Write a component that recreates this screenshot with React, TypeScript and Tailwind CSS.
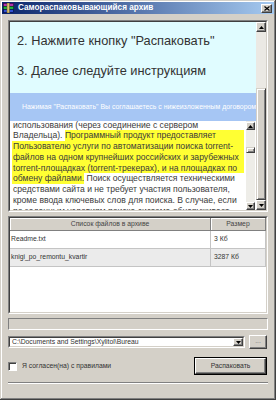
import React from "react";

function Tri({ up = false }: { up?: boolean }) {
  return (
    <svg width="5" height="3" viewBox="0 0 5 3" className="block">
      {up ? (
        <polygon points="2.5,0 5,3 0,3" fill="#000" />
      ) : (
        <polygon points="0,0 5,0 2.5,3" fill="#000" />
      )}
    </svg>
  );
}

function ArrowBtn({ up = false, className = "" }: { up?: boolean; className?: string }) {
  return (
    <div
      className={`bg-[#d4d0c8] border border-t-white border-l-white border-r-[#404040] border-b-[#404040] shadow-[inset_-1px_-1px_0_#808080] flex items-center justify-center shrink-0 ${className}`}
    >
      <Tri up={up} />
    </div>
  );
}

function Thumb({ className = "" }: { className?: string }) {
  return (
    <div
      className={`bg-[#d4d0c8] border border-t-[#d4d0c8] border-l-[#d4d0c8] border-r-[#404040] border-b-[#404040] shadow-[inset_1px_1px_0_#ffffff,inset_-1px_-1px_0_#808080] ${className}`}
    />
  );
}

function Sunken({
  className = "",
  innerClassName = "",
  children,
}: {
  className?: string;
  innerClassName?: string;
  children?: React.ReactNode;
}) {
  return (
    <div className={`border border-t-[#808080] border-l-[#808080] border-r-white border-b-white ${className}`}>
      <div
        className={`w-full h-full border border-t-[#404040] border-l-[#404040] border-r-[#d4d0c8] border-b-[#d4d0c8] ${innerClassName}`}
      >
        {children}
      </div>
    </div>
  );
}

function RarIcon() {
  return (
    <svg width="11" height="10" viewBox="0 0 11 10" className="block">
      <rect x="0.5" y="0.5" width="10" height="3" fill="#b030b0" stroke="#400040" strokeWidth="0.6" />
      <rect x="0.5" y="3.5" width="10" height="3" fill="#20b040" stroke="#004010" strokeWidth="0.6" />
      <rect x="0.5" y="6.5" width="10" height="3" fill="#3050d0" stroke="#000840" strokeWidth="0.6" />
      <rect x="4" y="0" width="2.5" height="10" fill="#d8c070" stroke="#605010" strokeWidth="0.5" />
    </svg>
  );
}

export default function App() {
  return (
    <div className="w-[276px] h-[400px] bg-[#d4d0c8] flex flex-col overflow-hidden font-['Liberation_Sans',Arial,sans-serif] text-[#333] shadow-[inset_-1px_-1px_0_#404040,inset_1px_1px_0_#d4d0c8,inset_-2px_-2px_0_#808080,inset_2px_2px_0_#ffffff]">
      {/* Title bar */}
      <div className="mt-[2px] mx-[2px] h-[12px] shrink-0 flex items-center bg-[linear-gradient(to_right,#0a246a,#a6caf0)]">
        <div className="ml-[1px]">
          <RarIcon />
        </div>
        <div className="ml-[4px] text-[8.2px] font-bold text-white whitespace-nowrap leading-none">
          Самораспаковывающийся архив
        </div>
        <div className="flex-1" />
        <div className="mr-[2px] w-[11px] h-[9px] bg-[#d4d0c8] border border-t-white border-l-white border-r-[#404040] border-b-[#404040] shadow-[inset_-1px_-1px_0_#808080] flex items-center justify-center">
          <svg width="6" height="5" viewBox="0 0 6 5" className="block">
            <path d="M0.5 0.5 L5.5 4.5 M5.5 0.5 L0.5 4.5" stroke="#000" strokeWidth="1.2" />
          </svg>
        </div>
      </div>

      <div className="px-[8px] flex flex-col">
        {/* Top HTML pane */}
        <Sunken className="mt-[6px] h-[192px]" innerClassName="flex overflow-hidden">
          <div className="flex-1 min-w-0 bg-[#e0fcff] flex flex-col overflow-hidden">
            <div className="pl-[7px] pt-[4px] text-[12.8px] leading-[30px] text-[#333] whitespace-nowrap">
              <div>2. Нажмите кнопку "Распаковать"</div>
              <div>3. Далее следуйте инструкциям</div>
            </div>
            <div className="mt-[7px] h-[28px] shrink-0 bg-[#a6c6f4] flex items-center pl-[12px] text-[6.9px] text-white whitespace-nowrap overflow-hidden">
              Нажимая "Распаковать" Вы соглашаетесь с нижеизложенным договором
            </div>
            <div className="flex-1 min-h-0 bg-white flex overflow-hidden">
              <div className="flex-1 min-w-0 pl-[2px] pr-[2px] overflow-hidden">
                <div className="mt-[-1.4px] text-[8.6px] leading-[10.75px] text-[#3a3a3a] whitespace-nowrap">
                  <div className="pl-[1px]">использования (через соединение с сервером</div>
                  <div className="pl-[1px] flex">
                    <span>Владельца).&nbsp;</span>
                    <span className="flex-1 bg-[#ffff33]">Программный продукт предоставляет</span>
                  </div>
                  <div className="pl-[1px] bg-[#ffff33]">Пользователю услуги по автоматизации поиска torrent-</div>
                  <div className="pl-[1px] bg-[#ffff33]">файлов на одном крупнейших российских и зарубежных</div>
                  <div className="pl-[1px] bg-[#ffff33]">torrent-площадках (torrent-трекерах), и на площадках по</div>
                  <div className="flex">
                    <span className="pl-[1px] bg-[#ffff33]">обмену файлами.</span>
                    <span>&nbsp;Поиск осуществляется техническими</span>
                  </div>
                  <div className="pl-[1px]">средствами сайта и не требует участия пользователя,</div>
                  <div className="pl-[1px]">кроме ввода ключевых слов для поиска. В случае, если</div>
                  <div className="pl-[1px]">по заданным условиям поиска система обнаруживает</div>
                </div>
              </div>
              <div className="w-[9px] mr-[1px] pt-[1px] flex flex-col bg-[#eeede8]">
                <ArrowBtn up className="h-[8px]" />
                <div className="h-[17px]" />
                <Thumb className="h-[6px]" />
                <div className="flex-1" />
                <ArrowBtn className="h-[8px]" />
              </div>
            </div>
          </div>
          <div className="w-[10px] flex flex-col bg-[#ebe9e4]">
            <ArrowBtn up className="h-[10px]" />
            <div className="h-[56px]" />
            <Thumb className="flex-1" />
            <ArrowBtn className="h-[10px]" />
          </div>
        </Sunken>

        {/* File list */}
        <Sunken className="mt-[4px] h-[98px]" innerClassName="bg-white flex flex-col overflow-hidden">
          <div className="h-[13px] shrink-0 flex text-[6.8px] text-[#444]">
            <div className="w-[201px] flex items-center justify-center bg-[#d4d0c8] border-r border-b border-r-[#808080] border-b-[#808080] shadow-[inset_1px_1px_0_#ffffff]">
              Список файлов в архиве
            </div>
            <div className="flex-1 flex items-center justify-center bg-[#d4d0c8] border-r border-b border-r-[#808080] border-b-[#808080] shadow-[inset_1px_1px_0_#ffffff]">
              Размер
            </div>
          </div>
          <div className="h-[18px] shrink-0 flex text-[6.8px] text-[#333] bg-white border-b border-b-[#c4c4c4]">
            <div className="w-[201px] flex items-center pl-[1px] border-r border-r-[#c4c4c4]">Readme.txt</div>
            <div className="flex-1 flex items-center pl-[3px] border-r border-r-[#c4c4c4]">3 Кб</div>
          </div>
          <div className="h-[18px] shrink-0 flex text-[6.8px] text-[#333] bg-[#ebebeb] border-b border-b-[#c4c4c4]">
            <div className="w-[201px] flex items-center pl-[1px] border-r border-r-[#c4c4c4]">knigi_po_remontu_kvartir</div>
            <div className="flex-1 flex items-center pl-[3px] border-r border-r-[#c4c4c4]">3287 Кб</div>
          </div>
        </Sunken>

        {/* Progress bar */}
        <div className="mt-[4px] h-[12px] bg-[#d4d0c8] border border-t-[#808080] border-l-[#808080] border-r-white border-b-white" />

        {/* Path row */}
        <div className="mt-[5px] h-[14px] flex items-center">
          <Sunken className="flex-1 h-[12px]" innerClassName="bg-white flex items-center">
            <div className="flex-1 min-w-0 pl-[2px] text-[6.8px] text-[#333] whitespace-nowrap overflow-hidden">
              C:\Documents and Settings\Xylitol\Bureau
            </div>
            <ArrowBtn className="w-[10px] h-full" />
          </Sunken>
          <div className="ml-[4px] mr-[1px] w-[18px] h-[14px] bg-[#d4d0c8] border border-t-white border-l-white border-r-[#404040] border-b-[#404040] shadow-[inset_-1px_-1px_0_#808080] flex items-center justify-center text-[6.8px] text-[#777] leading-none pb-[1px]">
            ...
          </div>
        </div>

        {/* Checkbox + button */}
        <div className="mt-[8px] h-[18px] flex items-center">
          <div className="w-[9px] h-[9px] bg-white border border-t-[#808080] border-l-[#808080] border-r-white border-b-white shadow-[inset_1px_1px_0_#404040] mt-[1px]" />
          <div className="ml-[5px] text-[6.8px] text-[#333] whitespace-nowrap">Я согласен(на) с правилами</div>
          <div className="ml-auto mr-[1px] w-[73px] h-[18px] border border-black">
            <div className="w-full h-full bg-[#d4d0c8] border border-t-white border-l-white border-r-[#404040] border-b-[#404040] shadow-[inset_-1px_-1px_0_#808080] flex items-center justify-center text-[6.8px] text-[#333]">
              Распаковать
            </div>
          </div>
        </div>

        {/* Separator */}
        <div className="mt-[7px] h-[2px] border-t border-b border-t-[#808080] border-b-white" />
      </div>
    </div>
  );
}
